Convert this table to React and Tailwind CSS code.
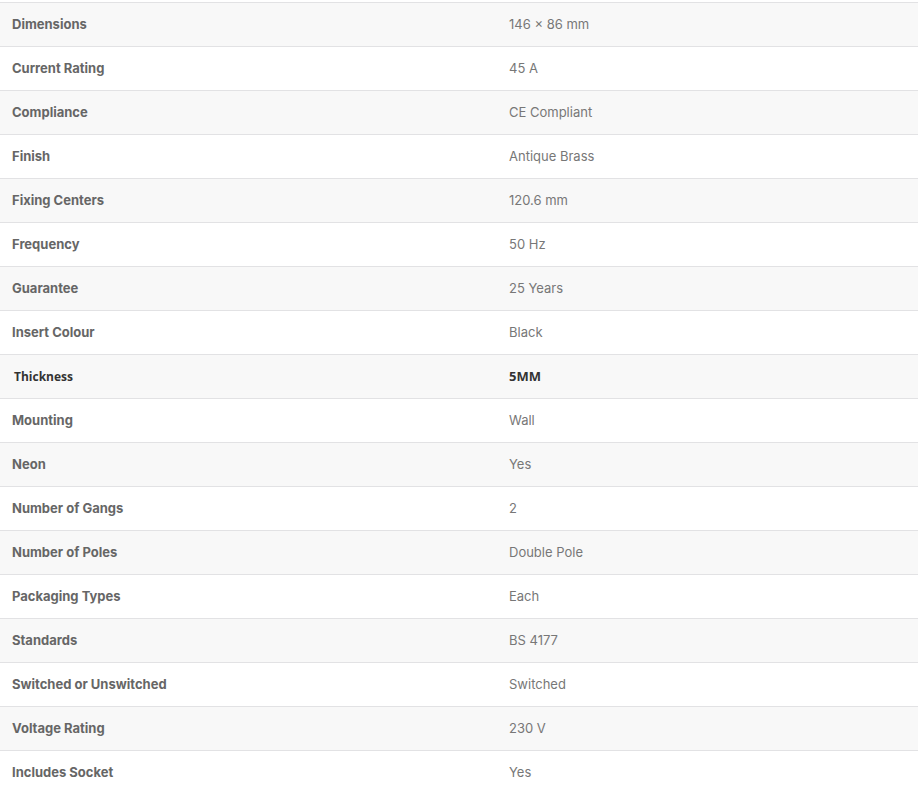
const SPECS = [
  ["Dimensions", "146 × 86 mm"],
  ["Current Rating", "45 A"],
  ["Compliance", "CE Compliant"],
  ["Finish", "Antique Brass"],
  ["Fixing Centers", "120.6 mm"],
  ["Frequency", "50 Hz"],
  ["Guarantee", "25 Years"],
  ["Insert Colour", "Black"],
  ["Thickness", "5MM", true],
  ["Mounting", "Wall"],
  ["Neon", "Yes"],
  ["Number of Gangs", "2"],
  ["Number of Poles", "Double Pole"],
  ["Packaging Types", "Each"],
  ["Standards", "BS 4177"],
  ["Switched or Unswitched", "Switched"],
  ["Voltage Rating", "230 V"],
  ["Includes Socket", "Yes"],
];

export default function App() {
  return (
    <div className="min-h-screen bg-white pt-[2px]">
      <div className="border-t border-[#e2e2e4]">
        {SPECS.map(([label, value, custom], i) => (
          <div
            key={label}
            className={
              "grid grid-cols-[497px_1fr] h-[44px] items-center border-b border-[#e2e2e4] " +
              (i % 2 === 0 ? "bg-[#f8f8f8]" : "bg-white")
            }
          >
            {custom ? (
              <>
                <div className="pl-[14px] text-[12px] font-bold text-[#333] font-['Open_Sans',sans-serif]">
                  {label}
                </div>
                <div className="pl-[12px] text-[13px] font-bold text-[#333] font-['Open_Sans',sans-serif]">
                  {value}
                </div>
              </>
            ) : (
              <>
                <div className="pl-[12px] text-[13px] font-bold text-[#666] font-['Inter',sans-serif]">
                  {label}
                </div>
                <div className="pl-[12px] text-[13px] text-[#777] font-['Inter',sans-serif]">
                  {value}
                </div>
              </>
            )}
          </div>
        ))}
      </div>
    </div>
  );
}
